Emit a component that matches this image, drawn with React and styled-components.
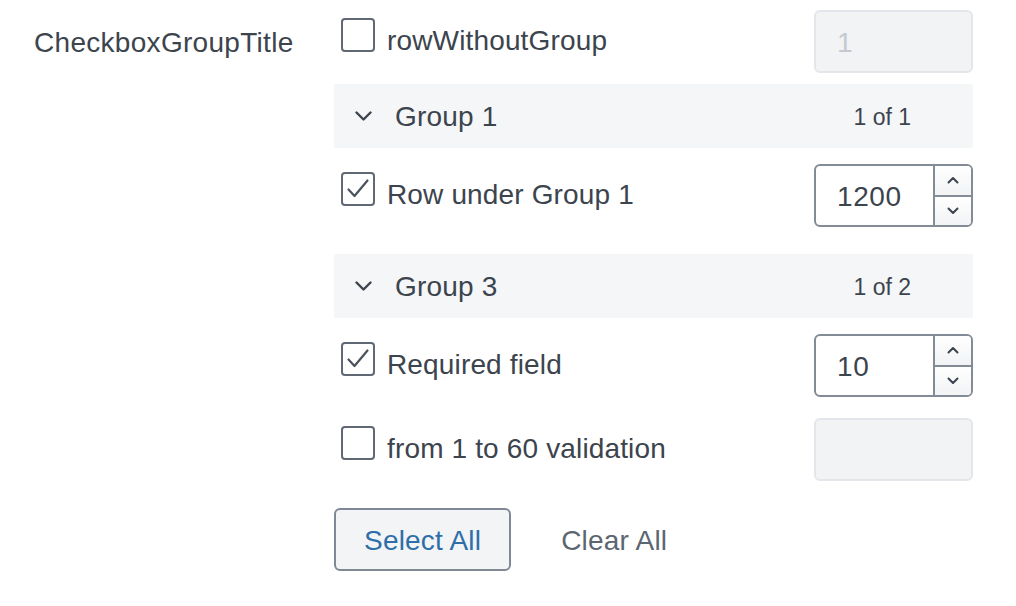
import React from 'react';
import styled, { createGlobalStyle } from 'styled-components';

const Global = createGlobalStyle`
  html, body { margin: 0; padding: 0; background: #ffffff; }
  body { font-family: "Liberation Sans", Arial, sans-serif; color: #3c444d; }
`;

const Page = styled.div`
  display: flex;
  align-items: flex-start;
  width: 1016px;
  height: 606px;
  box-sizing: border-box;
  padding-top: 10px;
`;

const FieldLabel = styled.div`
  width: 334px;
  box-sizing: border-box;
  padding: 16px 0 0 34px;
  font-size: 28px;
  line-height: 34px;
  letter-spacing: 0.3px;
  color: #3c444d;
`;

const Controls = styled.div`
  width: 639px;
  display: flex;
  flex-direction: column;
`;

const Row = styled.div`
  display: flex;
  justify-content: space-between;
  align-items: flex-start;
  height: 63px;
  margin-top: ${(p) => p.$mt || 0}px;
`;

const Choice = styled.label`
  display: flex;
  align-items: flex-start;
  gap: 12px;
  padding-left: 7px;
  cursor: pointer;
`;

const Box = styled.span`
  width: 34px;
  height: 34px;
  box-sizing: border-box;
  margin-top: 8px;
  border: 2px solid #5f6873;
  border-radius: 4px;
  background: #fff;
  display: flex;
  align-items: center;
  justify-content: center;
  flex-shrink: 0;
`;

const LabelText = styled.span`
  padding-top: 14px;
  font-size: 28px;
  line-height: 34px;
  letter-spacing: 0.15px;
  color: #3c444d;
  white-space: nowrap;
`;

const TextInput = styled.div`
  width: 159px;
  height: 63px;
  box-sizing: border-box;
  border: 2px solid ${(p) => (p.$disabled ? '#e3e6ea' : '#838c96')};
  background: ${(p) => (p.$disabled ? '#f2f3f5' : '#ffffff')};
  border-radius: 6px;
  display: flex;
  overflow: hidden;
`;

const Value = styled.div`
  flex: 1;
  display: flex;
  align-items: center;
  padding: 2px 0 0 21px;
  font-size: 28px;
  letter-spacing: 0.6px;
  color: ${(p) => (p.$muted ? '#c4c9cf' : '#3c444d')};
`;

const Spinner = styled.div`
  width: 38px;
  box-sizing: border-box;
  border-left: 2px solid #838c96;
  display: flex;
  flex-direction: column;
`;

const SpinButton = styled.div`
  flex: 1;
  display: flex;
  align-items: center;
  justify-content: center;
  background: linear-gradient(#ffffff, #f2f3f5);
  border-top: ${(p) => (p.$lower ? '2px solid #838c96' : 'none')};
`;

const Header = styled.div`
  height: 64px;
  margin-top: ${(p) => p.$mt || 0}px;
  background: #f5f6f8;
  display: flex;
  align-items: center;
  padding: 0 62px 0 21px;
  gap: 23px;
`;

const HeaderTitle = styled.span`
  padding-top: 2px;
  font-size: 28px;
  letter-spacing: 0.2px;
  color: #3c444d;
`;

const Count = styled.span`
  margin-left: auto;
  padding-top: 2px;
  font-size: 23px;
  color: #3c444d;
`;

const Footer = styled.div`
  display: flex;
  align-items: center;
  gap: 20px;
  margin-top: 27px;
`;

const Button = styled.button`
  height: 63px;
  box-sizing: border-box;
  padding: 2px 28px 0;
  border-radius: 6px;
  border: 2px solid ${(p) => (p.$primary ? '#7f8894' : 'transparent')};
  background: ${(p) => (p.$primary ? '#f2f4f6' : 'transparent')};
  color: ${(p) => (p.$primary ? '#2f6ea8' : '#5c6670')};
  font-family: "Liberation Sans", Arial, sans-serif;
  font-size: 28px;
  letter-spacing: 0.2px;
  cursor: pointer;
`;

const Check = () => (
  <svg width="26" height="26" viewBox="0 0 26 26" fill="none">
    <polyline points="3.5,13.5 9.5,20 22.5,4.5" stroke="#4a525b" strokeWidth="2.2" strokeLinecap="round" strokeLinejoin="round" />
  </svg>
);

const Chevron = () => (
  <svg width="17" height="10" viewBox="0 0 17 10" fill="none">
    <polyline points="1.5,1.5 8.5,8.5 15.5,1.5" stroke="#3c444d" strokeWidth="2.4" strokeLinecap="round" strokeLinejoin="round" />
  </svg>
);

const SmallArrow = ({ up }) => (
  <svg width="12" height="8" viewBox="0 0 12 8" fill="none">
    <polyline
      points={up ? '1.5,6.5 6,2 10.5,6.5' : '1.5,1.5 6,6 10.5,1.5'}
      stroke="#3c444d"
      strokeWidth="2"
      strokeLinecap="round"
      strokeLinejoin="round"
    />
  </svg>
);

const Checkbox = ({ checked, label }) => (
  <Choice>
    <Box>{checked && <Check />}</Box>
    <LabelText>{label}</LabelText>
  </Choice>
);

const NumberInput = ({ value }) => (
  <TextInput>
    <Value>{value}</Value>
    <Spinner>
      <SpinButton>
        <SmallArrow up />
      </SpinButton>
      <SpinButton $lower>
        <SmallArrow />
      </SpinButton>
    </Spinner>
  </TextInput>
);

const DisabledInput = ({ placeholder }) => (
  <TextInput $disabled>
    <Value $muted>{placeholder}</Value>
  </TextInput>
);

const GroupHeader = ({ title, count, mt }) => (
  <Header $mt={mt}>
    <Chevron />
    <HeaderTitle>{title}</HeaderTitle>
    <Count>{count}</Count>
  </Header>
);

export default function App() {
  return (
    <>
      <Global />
      <Page>
        <FieldLabel>CheckboxGroupTitle</FieldLabel>
        <Controls>
          <Row>
            <Checkbox label="rowWithoutGroup" />
            <DisabledInput placeholder="1" />
          </Row>
          <GroupHeader title="Group 1" count="1 of 1" mt={11} />
          <Row $mt={16}>
            <Checkbox checked label="Row under Group 1" />
            <NumberInput value="1200" />
          </Row>
          <GroupHeader title="Group 3" count="1 of 2" mt={27} />
          <Row $mt={16}>
            <Checkbox checked label="Required field" />
            <NumberInput value="10" />
          </Row>
          <Row $mt={21}>
            <Checkbox label="from 1 to 60 validation" />
            <DisabledInput placeholder="" />
          </Row>
          <Footer>
            <Button $primary>Select All</Button>
            <Button>Clear All</Button>
          </Footer>
        </Controls>
      </Page>
    </>
  );
}
